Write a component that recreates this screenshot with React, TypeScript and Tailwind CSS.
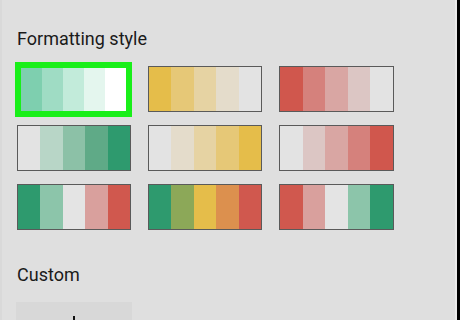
import React from 'react';

const swatches: string[][] = [
  ['#e5bd4a', '#e6c877', '#e6d3a3', '#e4dccb', '#e3e3e3'],
  ['#d0574d', '#d5817c', '#d9a6a3', '#dcc6c4', '#e3e3e3'],
  ['#e3e3e3', '#b8d6c7', '#8cc1a7', '#5faa87', '#2e9a6e'],
  ['#e3e3e3', '#e4dccb', '#e6d3a3', '#e6c877', '#e5bd4a'],
  ['#e3e3e3', '#dcc6c4', '#d9a6a3', '#d5817c', '#d0574d'],
  ['#2e9a6e', '#8cc5aa', '#e4e4e4', '#d9a09d', '#d0584e'],
  ['#2e9a6e', '#8ca858', '#e5bd4a', '#dc904e', '#d0584e'],
  ['#d0584e', '#d9a09d', '#e4e4e4', '#8cc5aa', '#2e9a6e'],
];

const selected = ['#7ecfaf', '#9fdcc4', '#c2ebda', '#e4f6ee', '#ffffff'];

const Strip: React.FC<{ colors: string[] }> = ({ colors }) => (
  <div className="flex h-full w-full">
    {colors.map((c, i) => (
      <div key={i} className="flex-1 h-full" style={{ backgroundColor: c }} />
    ))}
  </div>
);

export default function App() {
  return (
    <div className="w-[460px] h-[320px] overflow-hidden flex bg-[#dfdfdf] text-[#1a1a1a]" style={{ fontFamily: 'Roboto, "Liberation Sans", sans-serif' }}>
      <div className="w-[2px] h-full bg-[#d9d9d9]" />
      <div className="flex-1 pl-[15px] pt-[27px]">
        <h2 className="text-[18px] leading-[24px] font-normal">Formatting style</h2>

        <div className="mt-[15px] grid grid-cols-[114px_114px_115px] auto-rows-[46px] gap-x-[17px] gap-y-[13px]">
          <div className="w-[117px] h-[55px] -ml-[2px] -mt-[4px] -mb-[5px] border-[6px] border-[#19ef19]">
            <Strip colors={selected} />
          </div>
          {swatches.map((colors, i) => (
            <div key={i} className="w-full h-[46px] border border-[#5a5a5a]">
              <Strip colors={colors} />
            </div>
          ))}
        </div>

        <h2 className="mt-[33px] text-[18px] leading-[24px] font-normal">Custom</h2>

        <button className="mt-[15px] -ml-[1px] w-[116px] h-[48px] bg-[#d8d8d8] flex items-center justify-center">
          <svg width="20" height="20" viewBox="0 0 20 20">
            <path d="M10 0v20M0 10h20" stroke="#111" strokeWidth="2" />
          </svg>
        </button>
      </div>
      <div className="w-[2px] h-full bg-[#ebebeb]" />
      <div className="w-[3px] h-full bg-black" />
    </div>
  );
}
